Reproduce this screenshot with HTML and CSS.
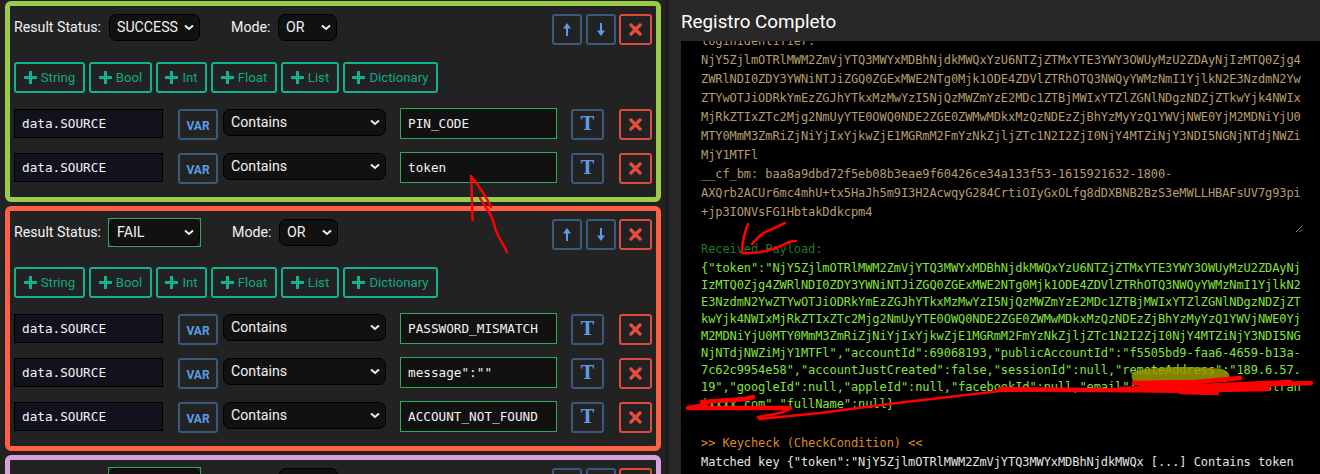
FILE: index.html
```html
<!DOCTYPE html>
<html lang="pt">
<head>
<meta charset="utf-8">
<title>Registro Completo</title>
<link rel="stylesheet" href="styles.css">
</head>
<body>
<svg width="0" height="0" class="defs">
  <defs>
    <symbol id="i-plus" viewBox="0 0 13 13"><path d="M5 0h3v5h5v3H8v5H5V8H0V5h5z"/></symbol>
    <symbol id="i-up" viewBox="0 0 10 13"><path d="M5 0l4 5.500H6V13H4V5.500H1z"/></symbol>
    <symbol id="i-down" viewBox="0 0 10 13"><path d="M5 13L1 7.500h3V0h2v7.500h3z"/></symbol>
    <symbol id="i-x" viewBox="0 0 12 12"><path d="M2.600.4L6 3.800 9.400.4a1 1 0 0 1 1.400 0l.8.8a1 1 0 0 1 0 1.400L8.200 6l3.400 3.400a1 1 0 0 1 0 1.400l-.8.8a1 1 0 0 1-1.400 0L6 8.200l-3.400 3.400a1 1 0 0 1-1.400 0l-.8-.8a1 1 0 0 1 0-1.400L3.800 6 .4 2.600a1 1 0 0 1 0-1.400l.8-.8a1 1 0 0 1 1.400 0z"/></symbol>
  </defs>
</svg>

<main class="left">
  <section class="panel panel-green">
    <div class="top">
      <label class="lbl">Result Status:</label>
      <span class="valid-none"><select class="sel sel-status"><option>SUCCESS</option></select></span>
      <label class="lbl lbl-mode">Mode:</label>
      <select class="sel sel-mode"><option>OR</option></select>
      <button class="btn btn-blue btn-arrow first"><svg class="ic-arrow"><use href="#i-up"/></svg></button>
      <button class="btn btn-blue btn-arrow"><svg class="ic-arrow"><use href="#i-down"/></svg></button>
      <button class="btn btn-red"><svg class="ic-x"><use href="#i-x"/></svg></button>
    </div>
    <div class="adds">
      <button class="add add-string"><svg class="ic-plus"><use href="#i-plus"/></svg>String</button>
      <button class="add add-bool"><svg class="ic-plus"><use href="#i-plus"/></svg>Bool</button>
      <button class="add add-int"><svg class="ic-plus"><use href="#i-plus"/></svg>Int</button>
      <button class="add add-float"><svg class="ic-plus"><use href="#i-plus"/></svg>Float</button>
      <button class="add add-list"><svg class="ic-plus"><use href="#i-plus"/></svg>List</button>
      <button class="add add-dict"><svg class="ic-plus"><use href="#i-plus"/></svg>Dictionary</button>
    </div>
    <div class="row">
      <input class="inp-left" value="data.SOURCE" readonly>
      <button class="btn btn-blue btn-var">VAR</button>
      <select class="sel sel-cond"><option>Contains</option></select>
      <input class="inp-right" value="PIN_CODE" readonly>
      <button class="btn btn-blue btn-t">T</button>
      <button class="btn btn-red btn-del"><svg class="ic-x"><use href="#i-x"/></svg></button>
    </div>
    <div class="row">
      <input class="inp-left" value="data.SOURCE" readonly>
      <button class="btn btn-blue btn-var">VAR</button>
      <select class="sel sel-cond"><option>Contains</option></select>
      <input class="inp-right" value="token" readonly>
      <button class="btn btn-blue btn-t">T</button>
      <button class="btn btn-red btn-del"><svg class="ic-x"><use href="#i-x"/></svg></button>
    </div>
  </section>

  <section class="panel panel-red">
    <div class="top">
      <label class="lbl">Result Status:</label>
      <span class="valid"><select class="sel sel-status"><option>FAIL</option></select></span>
      <label class="lbl lbl-mode">Mode:</label>
      <select class="sel sel-mode"><option>OR</option></select>
      <button class="btn btn-blue btn-arrow first"><svg class="ic-arrow"><use href="#i-up"/></svg></button>
      <button class="btn btn-blue btn-arrow"><svg class="ic-arrow"><use href="#i-down"/></svg></button>
      <button class="btn btn-red"><svg class="ic-x"><use href="#i-x"/></svg></button>
    </div>
    <div class="adds">
      <button class="add add-string"><svg class="ic-plus"><use href="#i-plus"/></svg>String</button>
      <button class="add add-bool"><svg class="ic-plus"><use href="#i-plus"/></svg>Bool</button>
      <button class="add add-int"><svg class="ic-plus"><use href="#i-plus"/></svg>Int</button>
      <button class="add add-float"><svg class="ic-plus"><use href="#i-plus"/></svg>Float</button>
      <button class="add add-list"><svg class="ic-plus"><use href="#i-plus"/></svg>List</button>
      <button class="add add-dict"><svg class="ic-plus"><use href="#i-plus"/></svg>Dictionary</button>
    </div>
    <div class="row">
      <input class="inp-left" value="data.SOURCE" readonly>
      <button class="btn btn-blue btn-var">VAR</button>
      <select class="sel sel-cond"><option>Contains</option></select>
      <input class="inp-right" value="PASSWORD_MISMATCH" readonly>
      <button class="btn btn-blue btn-t">T</button>
      <button class="btn btn-red btn-del"><svg class="ic-x"><use href="#i-x"/></svg></button>
    </div>
    <div class="row">
      <input class="inp-left" value="data.SOURCE" readonly>
      <button class="btn btn-blue btn-var">VAR</button>
      <select class="sel sel-cond"><option>Contains</option></select>
      <input class="inp-right" value="message&quot;:&quot;&quot;" readonly>
      <button class="btn btn-blue btn-t">T</button>
      <button class="btn btn-red btn-del"><svg class="ic-x"><use href="#i-x"/></svg></button>
    </div>
    <div class="row">
      <input class="inp-left" value="data.SOURCE" readonly>
      <button class="btn btn-blue btn-var">VAR</button>
      <select class="sel sel-cond"><option>Contains</option></select>
      <input class="inp-right" value="ACCOUNT_NOT_FOUND" readonly>
      <button class="btn btn-blue btn-t">T</button>
      <button class="btn btn-red btn-del"><svg class="ic-x"><use href="#i-x"/></svg></button>
    </div>
  </section>

  <section class="panel panel-purple">
    <div class="top">
      <label class="lbl"></label>
      <span class="valid"><select class="sel sel-status"></select></span>
      <label class="lbl lbl-mode"></label>
      <select class="sel sel-mode"></select>
      <button class="btn btn-blue btn-arrow first"></button>
      <button class="btn btn-blue btn-arrow"></button>
      <button class="btn btn-red"></button>
    </div>
  </section>
</main>

<aside class="right">
  <h2 class="title">Registro Completo</h2>
  <div class="log">
    <div class="request">
<pre class="mono req-text">loginIdentifier:
NjY5ZjlmOTRlMWM2ZmVjYTQ3MWYxMDBhNjdkMWQxYzU6NTZjZTMxYTE3YWY3OWUyMzU2ZDAyNjIzMTQ0Zjg4
ZWRlNDI0ZDY3YWNiNTJiZGQ0ZGExMWE2NTg0Mjk1ODE4ZDVlZTRhOTQ3NWQyYWMzNmI1YjlkN2E3NzdmN2Yw
ZTYwOTJiODRkYmEzZGJhYTkxMzMwYzI5NjQzMWZmYzE2MDc1ZTBjMWIxYTZlZGNlNDgzNDZjZTkwYjk4NWIx
MjRkZTIxZTc2Mjg2NmUyYTE0OWQ0NDE2ZGE0ZWMwMDkxMzQzNDEzZjBhYzMyYzQ1YWVjNWE0YjM2MDNiYjU0
MTY0MmM3ZmRiZjNiYjIxYjkwZjE1MGRmM2FmYzNkZjljZTc1N2I2ZjI0NjY4MTZiNjY3NDI5NGNjNTdjNWZi
MjY1MTFl
__cf_bm: baa8a9dbd72f5eb08b3eae9f60426ce34a133f53-1615921632-1800-
AXQrb2ACUr6mc4mhU+tx5HaJh5m9I3H2AcwqyG284CrtiOIyGxOLfg8dDXBNB2BzS3eMWLLHBAFsUV7g93pi
+jp3IONVsFG1HbtakDdkcpm4</pre>
      <svg class="grip" viewBox="0 0 8 8"><path d="M1 7L7 1M4.500 7L7 4.500"/></svg>
    </div>
    <div class="mono recv">Received Payload:</div>
<pre class="mono payload">{"token":"NjY5ZjlmOTRlMWM2ZmVjYTQ3MWYxMDBhNjdkMWQxYzU6NTZjZTMxYTE3YWY3OWUyMzU2ZDAyNj
IzMTQ0Zjg4ZWRlNDI0ZDY3YWNiNTJiZGQ0ZGExMWE2NTg0Mjk1ODE4ZDVlZTRhOTQ3NWQyYWMzNmI1YjlkN2
E3NzdmN2YwZTYwOTJiODRkYmEzZGJhYTkxMzMwYzI5NjQzMWZmYzE2MDc1ZTBjMWIxYTZlZGNlNDgzNDZjZT
kwYjk4NWIxMjRkZTIxZTc2Mjg2NmUyYTE0OWQ0NDE2ZGE0ZWMwMDkxMzQzNDEzZjBhYzMyYzQ1YWVjNWE0Yj
M2MDNiYjU0MTY0MmM3ZmRiZjNiYjIxYjkwZjE1MGRmM2FmYzNkZjljZTc1N2I2ZjI0NjY4MTZiNjY3NDI5NG
NjNTdjNWZiMjY1MTFl","accountId":69068193,"publicAccountId":"f5505bd9-faa6-4659-b13a-
7c62c9954e58","accountJustCreated":false,"sessionId":null,"remoteAddress":"189.6.57.
19","googleId":null,"appleId":null,"facebookId":null,"email":"xxxxxxxxxxxxxxxxtstran
ixxxx.com","fullName":null}</pre>
    <div class="mono keycheck">&gt;&gt; Keycheck (CheckCondition) &lt;&lt;</div>
    <div class="mono matched">Matched key {"token":"NjY5ZjlmOTRlMWM2ZmVjYTQ3MWYxMDBhNjdkMWQx [...] Contains token</div>
  </div>
</aside>

<svg class="ink" viewBox="0 0 1320 474" width="1320" height="474">
  <path class="ink-hl" d="M1133 372C1150 366 1195 366 1222 369C1231 372 1231 378 1227 382L1136 385C1131 380 1131 375 1133 372z"/>
  <path class="ink-line" d="M471 176C472 190 472 205 472.500 220M471 176C478 185 486 196 491 207M480 198C485 207 492 214 494 224C496 235 503 243 507 252"/>
  <path class="ink-line" d="M748 224C745 232 742 240 742 253C755 254 770 251 783 245C788 242 792 241 796 241M752 244C758 238 762 232 768 231C775 228 780 225 785 223"/>
  <path class="ink-line" d="M1311 383L1240 386L1130 389L1000 391L897 403L820 413L760 419L758 417L780 413L790 409"/>
  <path class="ink-thick" d="M1134 383L1195 382L1240 378M1120 389L1311 383M1000 389L1215 391M1180 392L1217 393M1200 386L1290 382M1140 386L1260 386M1215 390L1268 389"/>
  <path class="ink-thick" d="M790 408L688 408L706 405M702 402L745 399L753 397"/>
</svg>
</body>
</html>
```
FILE: styles.css
```css
* { box-sizing: border-box; }

html, body {
  margin: 0;
  height: 100%;
  overflow: hidden;
}

body {
  display: flex;
  width: 1320px;
  height: 474px;
  background: #222;
  font-family: Roboto, "Liberation Sans", sans-serif;
  color: #eee;
  position: relative;
}

.defs { position: absolute; }

/* left column */
.left {
  width: 669px;
  flex: none;
  padding: 1px 4px 0 5px;
  background: #222;
  border-right: 4px solid #1d1d1d;
  overflow: hidden;
}

.panel {
  height: 201px;
  margin-bottom: 4px;
  padding: 8px 4px 0;
  border: 5px solid;
  border-radius: 6px;
  background: #222;
}
.panel-green { border-color: #9bcb4b; }
.panel-red { border-color: #ff5f45; height: 245px; }
.panel-purple { border-color: #d9a0d9; }

.top {
  display: flex;
  align-items: flex-start;
  height: 31px;
  margin-bottom: 17px;
}

.lbl {
  font-size: 14.200px;
  line-height: 27px;
  color: #f2f2f2;
  width: 95px;
  flex: none;
  white-space: nowrap;
}
.lbl-mode { width: 47px; margin-left: 31px; }

.sel {
  appearance: none;
  display: block;
  height: 27px;
  padding: 0 0 1px 7px;
  border: 1px solid #000;
  border-radius: 7px;
  background: #111 url("data:image/svg+xml,%3Csvg xmlns='http://www.w3.org/2000/svg' width='10' height='7' viewBox='0 0 10 7'%3E%3Cpath d='M1 1.500l4 3.500 4-3.500' fill='none' stroke='%23eee' stroke-width='2'/%3E%3C/svg%3E") no-repeat right 5px center;
  color: #f2f2f2;
  font: 14.200px Roboto, "Liberation Sans", sans-serif;
}
.sel-status { width: 91px; }
.sel-mode { width: 59px; }
.sel-cond { width: 163px; margin: 1px 14px 0 5px; }

.valid-none { display: block; width: 91px; }
.valid {
  display: block;
  width: 93px;
  height: 29px;
  margin: -1px 0 0 -1px;
  border: 1px solid #2da95a;
}

.btn {
  display: flex;
  align-items: center;
  justify-content: center;
  padding: 0;
  height: 31px;
  flex: none;
  background: transparent;
  border: 2px solid;
  border-radius: 3px;
}
.btn-blue { border-color: #38597d; color: #5a9be6; }
.btn-red { border-color: #dd4b3d; color: #e64c3c; width: 33px; margin-left: 3px; }
.btn-arrow { width: 30px; margin-right: 4px; }
.btn-arrow + .btn-arrow { margin-right: 0; }
.first { margin-left: auto; }

.ic-arrow { width: 10px; height: 13px; fill: currentColor; }
.ic-x { width: 13px; height: 13px; fill: currentColor; }
.ic-plus { width: 13px; height: 13px; fill: currentColor; margin-right: 4px; flex: none; }

.adds {
  display: flex;
  gap: 4px;
  margin-bottom: 15px;
}

.add {
  display: flex;
  align-items: center;
  justify-content: center;
  height: 31px;
  padding: 0;
  background: transparent;
  border: 2px solid #10b28f;
  border-radius: 3px;
  color: #0fa886;
  font: 13.200px Roboto, "Liberation Sans", sans-serif;
}
.add .ic-plus { fill: #10b28f; }
.add-string { width: 71px; }
.add-bool { width: 63px; }
.add-int { width: 51px; }
.add-float { width: 66px; }
.add-list { width: 58px; }
.add-dict { width: 95px; }

.row {
  display: flex;
  align-items: flex-start;
  height: 31px;
  margin-bottom: 13px;
}

.inp-left, .inp-right {
  font: 12.700px "DejaVu Sans Mono", "Liberation Mono", monospace;
  color: #f2f2f2;
  outline: none;
}
.inp-left {
  width: 149px;
  height: 29px;
  margin: 1px 15px 0 0;
  padding: 0 7px;
  border: 1px solid #000;
  background: #12121f;
}
.inp-right {
  width: 157px;
  height: 31px;
  padding: 0 7px;
  border: 1px solid #2da95a;
  background: #111;
}
.btn-var {
  width: 40px;
  margin-top: 1px;
  font: 700 12px Roboto, "Liberation Sans", sans-serif;
  padding-top: 2px;
}
.btn-t {
  width: 33px;
  margin: 1px 0 0 14px;
  font: 700 18px "DejaVu Serif", "Liberation Serif", serif;
  padding-bottom: 2px;
}
.btn-del { margin: 1px 0 0 15px; }

/* right column */
.right {
  flex: 1;
  min-width: 0;
  background: #282828;
  display: flex;
  flex-direction: column;
}

.title {
  flex: none;
  height: 41px;
  margin: 0;
  padding-left: 12px;
  font: 400 18.800px/44px Roboto, "Liberation Sans", sans-serif;
  color: #fff;
}

.log {
  flex: 1;
  margin-left: 12px;
  padding-left: 20px;
  background: #000;
  overflow: hidden;
}

.mono {
  margin: 0;
  font: 12px/19px "DejaVu Sans Mono", "Liberation Mono", monospace;
  letter-spacing: -0.085px;
  white-space: pre;
}

.request {
  position: relative;
  width: 602px;
  height: 201px;
  margin-top: -9px;
}
.req-text { color: #b89c6c; }
.grip {
  position: absolute;
  right: 0;
  bottom: 0;
  width: 8px;
  height: 8px;
  fill: none;
  stroke: #888;
  stroke-width: 1;
}

.recv { color: #1b7a2c; margin-top: 7px; }
.payload { color: #84e33c; line-height: 17px; margin-top: 1px; }
.keycheck { color: #dd8a22; margin-top: 21px; }
.matched { color: #e4e4e4; }

/* hand-drawn annotations on the screenshot */
.ink {
  position: absolute;
  top: 0;
  left: 0;
  pointer-events: none;
  fill: none;
  stroke-linecap: round;
  stroke-linejoin: round;
}
.ink-hl { fill: #9a9a00; opacity: .85; }
.ink-line { stroke: #f00; stroke-width: 2.500; }
.ink-thick { stroke: #f00; stroke-width: 4.500; }
```
